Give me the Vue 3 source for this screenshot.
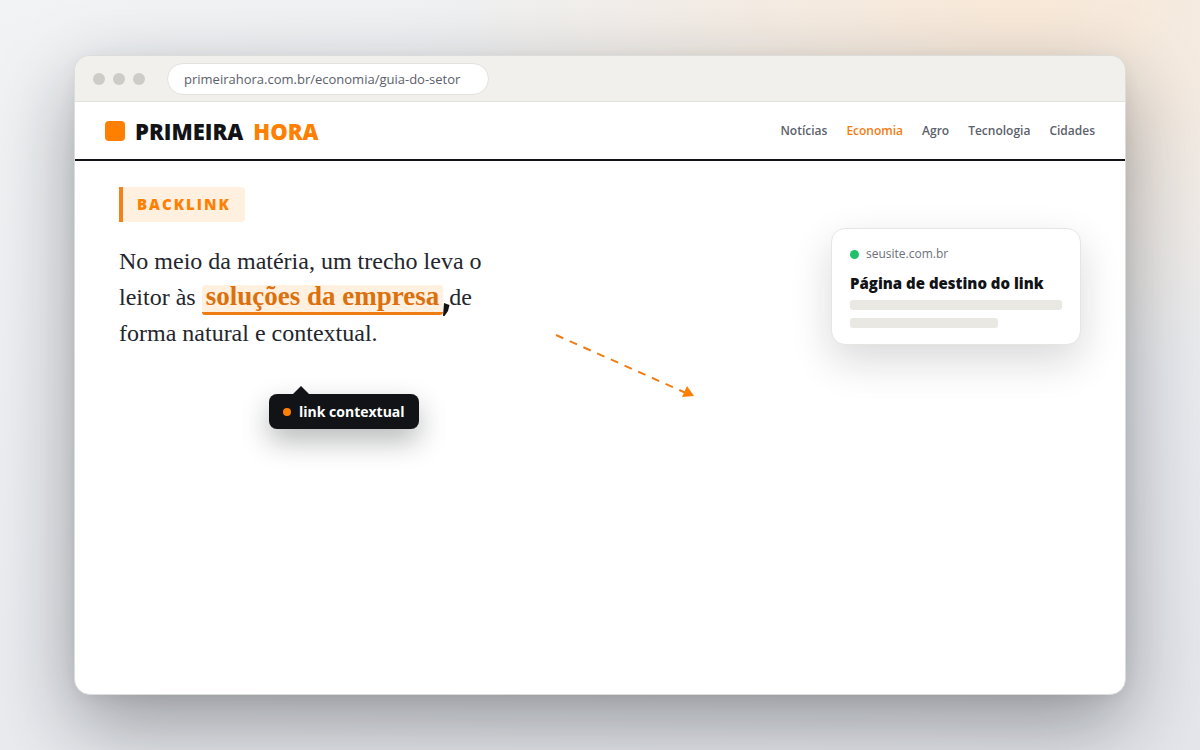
<script setup>
const sections = [
  { name: 'Notícias' },
  { name: 'Economia', current: true },
  { name: 'Agro' },
  { name: 'Tecnologia' },
  { name: 'Cidades' },
]
</script>

<template>
  <div class="stage">
    <div class="window">
      <div class="toolbar">
        <div class="dots"><i></i><i></i><i></i></div>
        <div class="address">primeirahora.com.br/economia/guia-do-setor</div>
      </div>
      <header class="masthead">
        <div class="brand">
          <span class="mark"></span>
          <span>PRIMEIRA</span>
          <span class="accent">HORA</span>
        </div>
        <nav class="nav">
          <a v-for="s in sections" :key="s.name" href="#" :class="{ current: s.current }">{{ s.name }}</a>
        </nav>
      </header>
      <main class="content">
        <article class="story">
          <span class="tag">BACKLINK</span>
          <p class="copy">
            No meio da matéria, um trecho leva o<br />
            leitor às
            <a class="anchor" href="#">soluções da empresa<svg class="pointer" width="7" height="14" viewBox="0 0 7 14" aria-hidden="true"><path d="M1 0 6.5 2 5 8 1.5 13 0 13Z" fill="#111317" /></svg></a>
            de<br />
            forma natural e contextual.
          </p>
          <div class="tip"><i></i>link contextual</div>
        </article>
        <svg class="arrow" width="140" height="66" viewBox="0 0 140 66" aria-hidden="true">
          <path d="M1 1 131 59" fill="none" stroke="#f07d14" stroke-width="2" stroke-dasharray="8 7" />
          <path d="M132 52 139 62 127 63Z" fill="#ff8000" />
        </svg>
        <aside class="card">
          <div class="site"><i></i>seusite.com.br</div>
          <h2>Página de destino do link</h2>
          <div class="line"></div>
          <div class="line short"></div>
        </aside>
      </main>
    </div>
  </div>
</template>

<style>
body {
  margin: 0;
}
</style>

<style scoped>
.stage {
  box-sizing: border-box;
  min-height: 100vh;
  display: flex;
  padding: 55px 74px;
  overflow: hidden;
  background:
    radial-gradient(ellipse 600px 375px at 85% 0%, #f9e9d8 0%, rgba(249, 233, 216, 0) 100%),
    linear-gradient(160deg, #f1f3f5 0%, #e4e6eb 100%);
  font-family: "Open Sans", "Noto Sans", sans-serif;
  color: #111317;
}
.window {
  flex: 1;
  display: flex;
  flex-direction: column;
  border: 1px solid #dcdcda;
  border-radius: 16px;
  overflow: hidden;
  background: #fff;
  box-shadow: 0 30px 80px rgba(17, 19, 23, 0.38), 0 4px 16px rgba(17, 19, 23, 0.06);
}
.toolbar {
  display: flex;
  align-items: center;
  gap: 22px;
  height: 45px;
  padding: 0 18px;
  background: #f1f0ec;
  border-bottom: 1px solid #e2e1dc;
}
.dots {
  display: flex;
  gap: 8px;
}
.dots i {
  width: 12px;
  height: 12px;
  border-radius: 50%;
  background: #cdccc7;
}
.address {
  box-sizing: border-box;
  min-width: 322px;
  padding: 0 16px;
  border: 1px solid #e2e1dc;
  border-radius: 16px;
  background: #fff;
  color: #5b616b;
  font-size: 13px;
  line-height: 30px;
}
.masthead {
  display: flex;
  align-items: center;
  justify-content: space-between;
  height: 57px;
  padding: 0 30px;
  border-bottom: 2px solid #111317;
}
.brand {
  display: flex;
  align-items: center;
  gap: 10px;
  font-size: 22px;
  font-weight: 800;
  line-height: 30px;
}
.mark {
  width: 20px;
  height: 20px;
  border-radius: 4px;
  background: #ff8000;
}
.accent {
  color: #ff8000;
}
.nav {
  display: flex;
  gap: 19px;
  font-size: 12px;
  font-weight: 600;
}
.nav a {
  color: #5b616b;
  text-decoration: none;
}
.nav a.current {
  color: #f07d14;
}
.content {
  flex: 1;
  display: flex;
  align-items: flex-start;
  padding: 26px 44px;
}
.story {
  flex: 0 0 436px;
}
.tag {
  display: inline-block;
  padding: 0 14px;
  border-left: 4px solid #f58218;
  border-radius: 0 4px 4px 0;
  background: #fff0e0;
  color: #ff8000;
  font-size: 15px;
  font-weight: 800;
  line-height: 35px;
  letter-spacing: 2px;
  vertical-align: top;
}
.copy {
  margin: 21px 0 43px;
  font-family: Georgia, "Liberation Serif", serif;
  font-size: 24px;
  line-height: 36px;
  color: #23262d;
  white-space: nowrap;
}
.anchor {
  position: relative;
  display: inline-block;
  padding: 0 4px 4px;
  border-bottom: 3px solid #f07d14;
  border-radius: 3px;
  background: #fff0e0;
  color: #dc700c;
  font-size: 27px;
  font-weight: 700;
  line-height: 23px;
  text-decoration: none;
}
.pointer {
  position: absolute;
  right: -7px;
  bottom: -5px;
}
.tip {
  position: relative;
  display: flex;
  align-items: center;
  gap: 8px;
  width: max-content;
  margin-left: 150px;
  padding: 0 14px;
  border-radius: 8px;
  background: #111317;
  color: #fff;
  font-size: 14px;
  font-weight: 700;
  line-height: 35px;
  box-shadow: 0 12px 28px rgba(17, 19, 23, 0.3);
}
.tip::before {
  content: "";
  position: absolute;
  left: 24px;
  top: -8px;
  border: 8px solid transparent;
  border-top: 0;
  border-bottom-color: #111317;
}
.tip i {
  width: 8px;
  height: 8px;
  border-radius: 50%;
  background: #ff8000;
}
.arrow {
  flex: none;
  margin-top: 147px;
}
.card {
  box-sizing: border-box;
  width: 250px;
  margin: 41px 0 0 auto;
  padding: 15px 18px 16px;
  border: 1px solid #e6e5e1;
  border-radius: 14px;
  background: #fff;
  box-shadow: 0 16px 40px rgba(17, 19, 23, 0.16);
}
.site {
  display: flex;
  align-items: center;
  gap: 7px;
  color: #6b7079;
  font-size: 12px;
  line-height: 20px;
}
.site i {
  width: 9px;
  height: 9px;
  border-radius: 50%;
  background: #22c06a;
}
.card h2 {
  margin: 9px 0 6px;
  font-size: 15px;
  font-weight: 800;
  line-height: 21px;
}
.line {
  height: 10px;
  border-radius: 3px;
  background: #e9e8e3;
}
.line.short {
  width: 70%;
  margin-top: 8px;
}
</style>
